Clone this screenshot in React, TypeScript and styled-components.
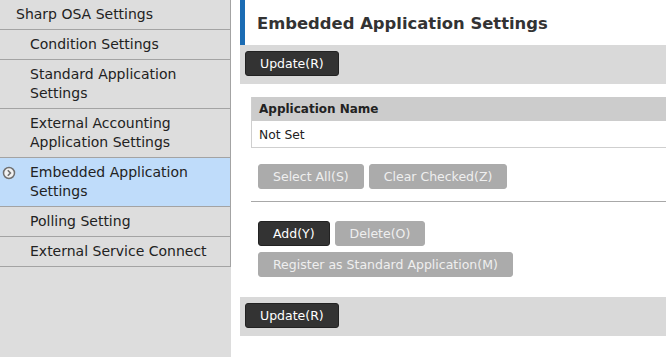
import styled, { createGlobalStyle } from 'styled-components';

const GlobalStyle = createGlobalStyle`
  html, body {
    margin: 0;
    padding: 0;
    background: #ffffff;
  }
  body {
    font-family: 'DejaVu Sans', Verdana, sans-serif;
    font-size: 13px;
    color: #222;
  }
`;

const Page = styled.div`
  display: flex;
  min-height: 357px;
  overflow: hidden;
`;

const Sidebar = styled.nav`
  width: 231px;
  flex: 0 0 231px;
  background-color: #dddddd;
`;

const NavList = styled.ul`
  list-style: none;
  margin: 0;
  padding: 0;
  width: 230px;
  border-right: 1px solid #a3a3a3;
`;

type NavItemProps = {
  $level: number;
  $active?: boolean;
};

const NavItem = styled.li<NavItemProps>`
  position: relative;
  box-sizing: border-box;
  padding: 5px 8px 5px ${(p) => (p.$level === 0 ? 16 : 30)}px;
  line-height: 19px;
  font-size: 14px;
  color: #222;
  border-bottom: 1px solid #a3a3a3;
  background-color: ${(p) => (p.$active ? '#bfdcfa' : 'transparent')};
`;

const ActiveMark = styled.svg`
  position: absolute;
  left: 2px;
  top: 8px;
`;

const Main = styled.main`
  flex: 1;
  padding-left: 9px;
  min-width: 0;
`;

const Title = styled.h1`
  box-sizing: border-box;
  margin: 0;
  height: 45px;
  padding: 13px 0 0 12px;
  line-height: 22px;
  border-left: 5px solid #1b6cb4;
  font-size: 16.4px;
  font-weight: bold;
  color: #333;
  white-space: nowrap;
`;

const ActionBar = styled.div`
  background-color: #d9d9d9;
  padding: 6px 5px 8px;
`;

type ButtonProps = {
  $disabled?: boolean;
};

const Button = styled.button<ButtonProps>`
  display: block;
  box-sizing: border-box;
  height: 25px;
  padding: 0 14px;
  border: 1px solid ${(p) => (p.$disabled ? '#ababab' : '#222')};
  border-radius: 3px;
  background-color: ${(p) => (p.$disabled ? '#ababab' : '#333333')};
  color: ${(p) => (p.$disabled ? '#efefef' : '#ffffff')};
  font-family: 'DejaVu Sans', Verdana, sans-serif;
  font-size: 12.5px;
  white-space: nowrap;
`;

const Section = styled.div`
  padding: 13px 0 0 11px;
`;

const Table = styled.table`
  width: 100%;
  border-collapse: collapse;
  border-left: 1px solid #cfcfcf;
  border-bottom: 1px solid #cfcfcf;
`;

const HeadCell = styled.th`
  text-align: left;
  background-color: #cccccc;
  font-weight: bold;
  height: 24px;
  padding: 0 7px;
  font-size: 12px;
`;

const Cell = styled.td`
  height: 25px;
  padding: 1px 7px 0;
  font-size: 12.3px;
  background: #fff;
`;

type ButtonRowProps = {
  $top?: number;
};

const ButtonRow = styled.div<ButtonRowProps>`
  display: flex;
  gap: 5px;
  padding-left: 7px;
  margin-top: ${(p) => p.$top ?? 0}px;
`;

const ButtonStack = styled.div`
  display: flex;
  flex-direction: column;
  gap: 6px;
`;

const Divider = styled.hr`
  margin: 12px 0 19px;
  border: none;
  border-top: 1px solid #a8a8a8;
`;

const BottomBar = styled(ActionBar)`
  margin-top: 20px;
`;

const navItems = [
  { label: 'Sharp OSA Settings', level: 0 },
  { label: 'Condition Settings', level: 1 },
  { label: 'Standard Application Settings', level: 1 },
  { label: 'External Accounting Application Settings', level: 1 },
  { label: 'Embedded Application Settings', level: 1, active: true },
  { label: 'Polling Setting', level: 1 },
  { label: 'External Service Connect', level: 1 },
];

const App = () => {
  return (
    <>
      <GlobalStyle />
      <Page>
        <Sidebar>
          <NavList>
            {navItems.map((item) => (
              <NavItem key={item.label} $level={item.level} $active={item.active}>
                {item.active && (
                  <ActiveMark width="14" height="14" viewBox="0 0 14 14">
                    <circle cx="7" cy="7" r="5.5" fill="#f2f2f2" stroke="#707070" strokeWidth="1.5" />
                    <path d="M5.8 4.3 L8.4 7 L5.8 9.7" fill="none" stroke="#707070" strokeWidth="1.6" />
                  </ActiveMark>
                )}
                {item.label}
              </NavItem>
            ))}
          </NavList>
        </Sidebar>
        <Main>
          <Title>Embedded Application Settings</Title>
          <ActionBar>
            <Button>Update(R)</Button>
          </ActionBar>
          <Section>
            <Table>
              <thead>
                <tr>
                  <HeadCell>Application Name</HeadCell>
                </tr>
              </thead>
              <tbody>
                <tr>
                  <Cell>Not Set</Cell>
                </tr>
              </tbody>
            </Table>
            <ButtonRow $top={16}>
              <Button $disabled>Select All(S)</Button>
              <Button $disabled>Clear Checked(Z)</Button>
            </ButtonRow>
            <Divider />
            <ButtonStack>
              <ButtonRow>
                <Button>Add(Y)</Button>
                <Button $disabled>Delete(O)</Button>
              </ButtonRow>
              <ButtonRow>
                <Button $disabled>Register as Standard Application(M)</Button>
              </ButtonRow>
            </ButtonStack>
          </Section>
          <BottomBar>
            <Button>Update(R)</Button>
          </BottomBar>
        </Main>
      </Page>
    </>
  );
};

export default App;
